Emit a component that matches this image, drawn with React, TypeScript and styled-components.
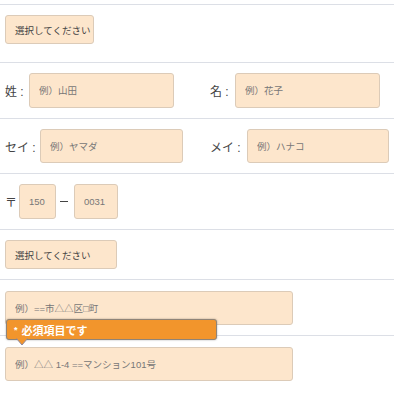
import React from "react";
import styled, { createGlobalStyle } from "styled-components";

const Global = createGlobalStyle`
  html, body { margin: 0; padding: 0; background: #fff; }
  body {
    font-family: "Liberation Sans", "Noto Sans CJK JP", sans-serif;
    color: #333;
  }
`;

const Page = styled.div`
  width: 394px;
`;

const TopEdge = styled.div`
  height: 4px;
  border-bottom: 1px solid #dcdfe6;
`;

const Row = styled.div<{ $pt?: number; $pb?: number }>`
  position: relative;
  display: flex;
  align-items: center;
  padding: ${(p) => p.$pt ?? 10}px 5px ${(p) => p.$pb ?? 10}px;
  border-bottom: 1px solid #dcdfe6;
`;

const SelectBox = styled.div<{ $w: number }>`
  box-sizing: border-box;
  width: ${(p) => p.$w}px;
  height: 29px;
  display: flex;
  align-items: center;
  padding-left: 9px;
  background: #fde6cc;
  border: 1px solid #dccbb8;
  border-radius: 3px;
  font-size: 9.5px;
  color: #444;
  white-space: nowrap;
`;

const PairGrid = styled.div`
  display: grid;
  grid-template-columns: 205px 1fr;
  width: 100%;
  align-items: center;
`;

const Pair = styled.div`
  display: flex;
  align-items: center;
`;

const Label = styled.span<{ $w: number }>`
  flex: none;
  width: ${(p) => p.$w}px;
  font-size: 12px;
  color: #444;
  white-space: nowrap;
`;

const Field = styled.input<{ $w: number; $h: number }>`
  box-sizing: border-box;
  flex: none;
  width: ${(p) => p.$w}px;
  height: ${(p) => p.$h}px;
  margin: 0;
  padding: 0 0 0 9px;
  background: #fde6cc;
  border: 1px solid #dccbb8;
  border-radius: 3px;
  font-family: inherit;
  font-size: 9.5px;
  color: #555;
  outline: none;
  &::placeholder {
    color: #777;
    opacity: 1;
  }
`;

const PostMark = styled.span`
  flex: none;
  width: 14px;
  font-size: 12px;
  color: #444;
`;

const Dash = styled.span`
  flex: none;
  width: 8px;
  height: 1.5px;
  margin: 0 6px 0 4px;
  background: #444;
`;

const Tooltip = styled.div`
  position: absolute;
  z-index: 2;
  left: 6px;
  top: 39px;
  box-sizing: border-box;
  width: 211px;
  height: 21px;
  display: flex;
  align-items: center;
  padding-left: 7px;
  background: #f2952c;
  border: 1px solid #8f8478;
  border-radius: 3px;
  box-shadow: 0 0 2px rgba(0, 0, 0, 0.35);
  color: #fff;
  font-weight: bold;
  font-size: 11px;
  white-space: nowrap;
`;

const Star = styled.span`
  margin-right: 4px;
  font-size: 9px;
`;

const Arrow = styled.svg`
  position: absolute;
  left: 9px;
  top: 100%;
  margin-top: -1px;
`;

export default function App() {
  return (
    <Page>
      <Global />
      <TopEdge />
      <Row $pb={18}>
        <SelectBox $w={89}>選択してください</SelectBox>
      </Row>
      <Row>
        <PairGrid>
          <Pair>
            <Label $w={24}>姓 :</Label>
            <Field $w={145} $h={35} placeholder="例）山田" />
          </Pair>
          <Pair>
            <Label $w={25}>名 :</Label>
            <Field $w={145} $h={35} placeholder="例）花子" />
          </Pair>
        </PairGrid>
      </Row>
      <Row>
        <PairGrid>
          <Pair>
            <Label $w={35}>セイ :</Label>
            <Field $w={143} $h={34} placeholder="例）ヤマダ" />
          </Pair>
          <Pair>
            <Label $w={37}>メイ :</Label>
            <Field $w={142} $h={34} placeholder="例）ハナコ" />
          </Pair>
        </PairGrid>
      </Row>
      <Row>
        <PostMark>〒</PostMark>
        <Field $w={37} $h={35} placeholder="150" />
        <Dash />
        <Field $w={44} $h={35} placeholder="0031" />
      </Row>
      <Row>
        <SelectBox $w={112}>選択してください</SelectBox>
      </Row>
      <Row $pt={11} $pb={10}>
        <Field $w={288} $h={34} placeholder="例）==市△△区□町" />
        <Tooltip>
          <Star>*</Star>必須項目です
          <Arrow width="12" height="8" viewBox="0 0 12 8">
            <path d="M0.5 0.5 L6 7 L11.5 0.5" fill="#f2952c" stroke="#8f8aa0" strokeWidth="1" />
          </Arrow>
        </Tooltip>
      </Row>
      <Row $pt={11} $pb={14}>
        <Field $w={288} $h={34} placeholder="例）△△ 1-4 ==マンション101号" />
      </Row>
    </Page>
  );
}
